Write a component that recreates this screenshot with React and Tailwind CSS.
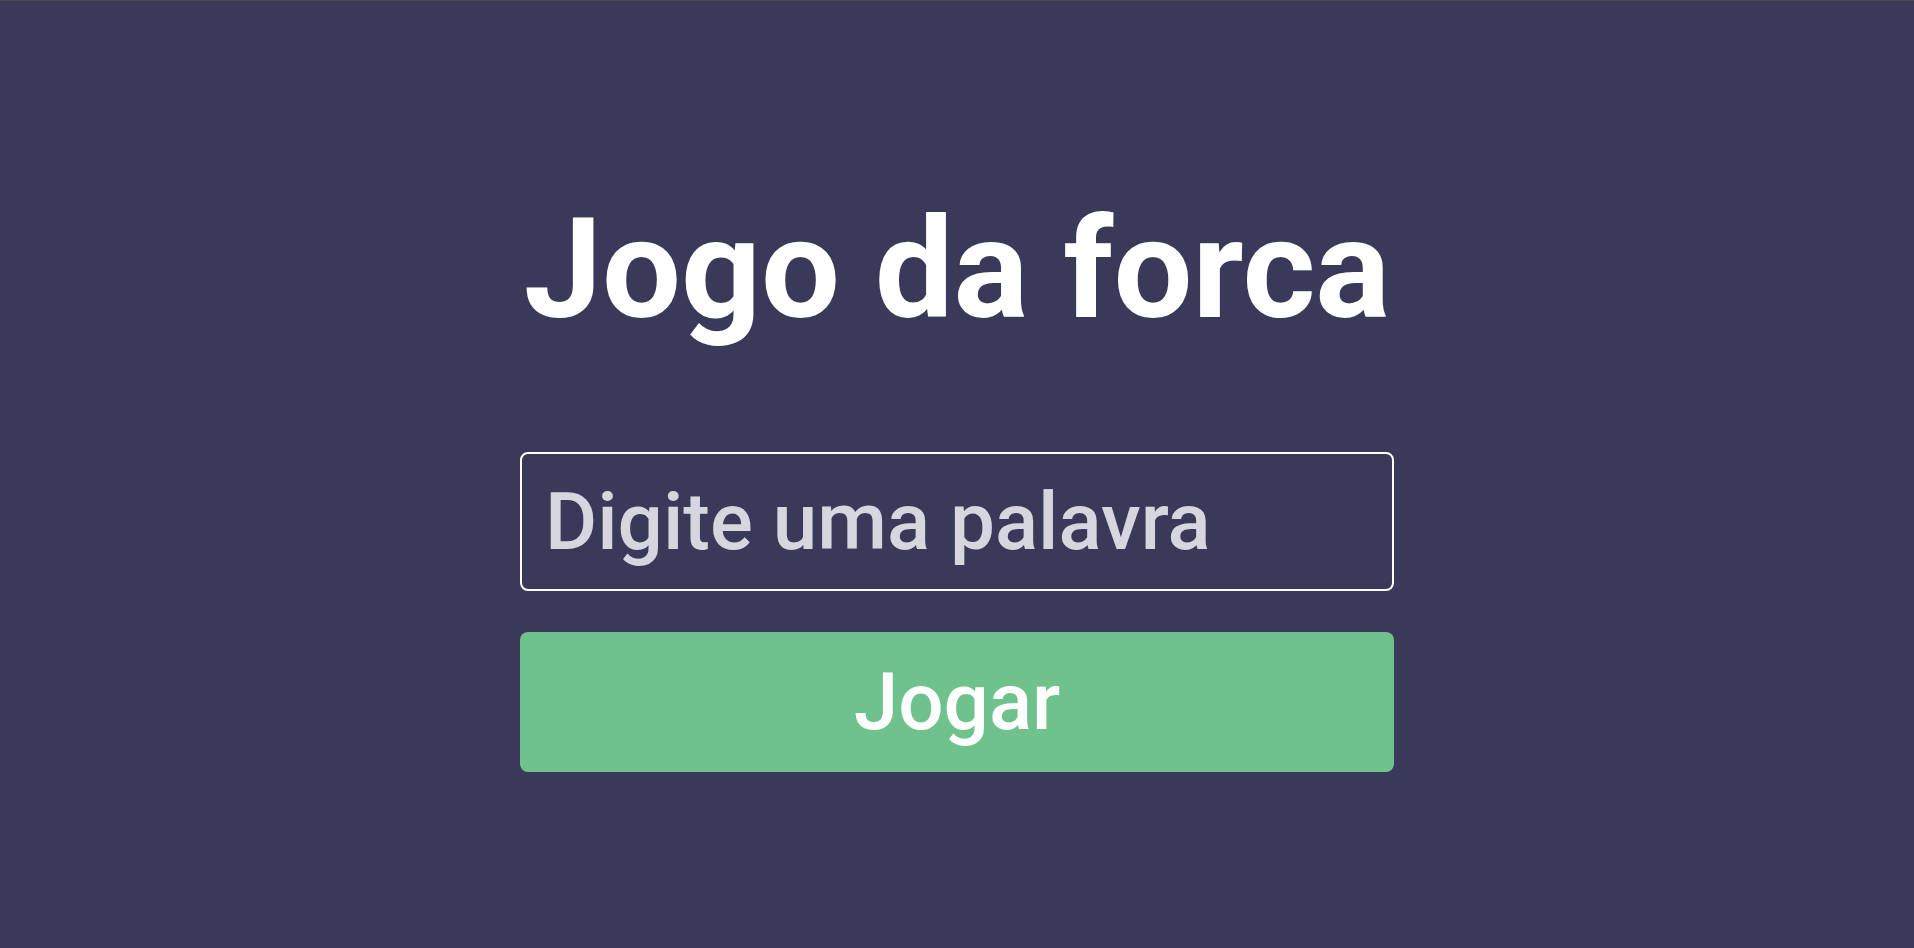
import { useState } from "react";

const App = () => {
  const [word, setWord] = useState("");

  return (
    <div
      className="min-h-screen bg-[#393a5a] border-t border-[#4b4b4f] pt-[186px]"
      style={{ fontFamily: "Roboto, 'Liberation Sans', sans-serif" }}
    >
      <div className="w-[874px] mx-auto flex flex-col">
        <h1 className="text-center text-white font-bold text-[140px] leading-[164px] whitespace-nowrap">
          Jogo da forca
        </h1>

        <input
          type="text"
          value={word}
          onChange={(e) => setWord(e.target.value)}
          placeholder="Digite uma palavra"
          className="mt-[101px] h-[139px] w-full rounded-[8px] border-2 border-white bg-transparent px-[23px] text-[80px] font-medium text-white placeholder:text-[#d5d6de] outline-none"
        />

        <button className="mt-[41px] h-[140px] w-full rounded-[8px] bg-[#6fc28b] text-[80px] font-medium text-white">
          Jogar
        </button>
      </div>
    </div>
  );
};

export default App;
